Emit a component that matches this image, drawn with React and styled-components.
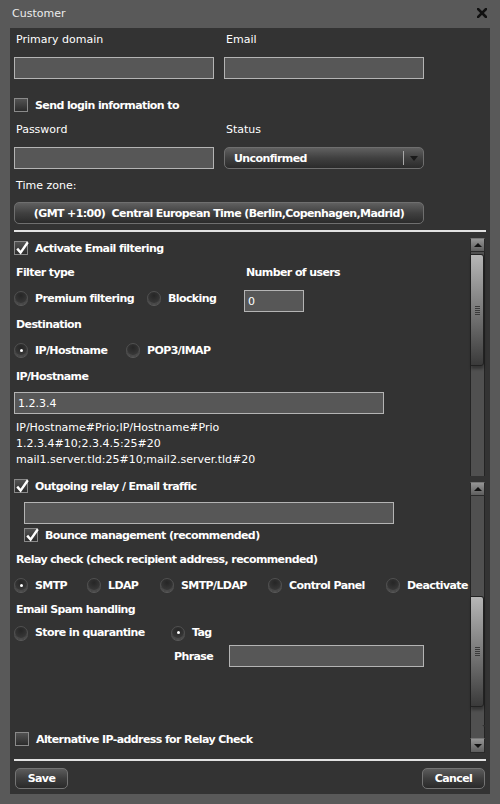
import React from 'react';
import styled, { createGlobalStyle } from 'styled-components';

const GlobalStyle = createGlobalStyle`
  html, body {
    margin: 0;
    padding: 0;
    background: #595959;
  }
  body {
    font-family: "DejaVu Sans", Verdana, sans-serif;
    font-size: 11px;
    color: #fff;
  }
  * {
    box-sizing: border-box;
  }
`;

const Dialog = styled.div`
  width: 500px;
  height: 804px;
  background: #595959;
  display: flex;
  flex-direction: column;
`;

const TitleBar = styled.div`
  height: 28px;
  flex: none;
  display: flex;
  align-items: center;
  justify-content: space-between;
  padding: 0 13px 2px 12px;
  color: #ececec;
`;

const CloseButton = styled.span`
  display: flex;
  width: 10px;
  height: 10px;
  cursor: pointer;
`;

const Panel = styled.div`
  flex: 1;
  margin: 0 10px 10px;
  background: #333333;
  display: flex;
  flex-direction: column;
`;

const TopForm = styled.div`
  padding: 4px 0 0 4px;
  display: flex;
  flex-direction: column;
`;

const Pair = styled.div`
  display: grid;
  grid-template-columns: 200px 200px;
  column-gap: 10px;
  row-gap: 9px;
  margin-top: ${p => p.$mt || 0}px;
`;

const FieldLabel = styled.div`
  height: 16px;
  line-height: 16px;
  padding-left: 2px;
  margin-top: ${p => p.$mt || 0}px;
  white-space: nowrap;
`;

const BoldLabel = styled.div`
  font-weight: bold;
  letter-spacing: -0.6px;
  padding-left: 2px;
  width: ${p => (p.$w ? `${p.$w}px` : 'auto')};
  flex: none;
  white-space: nowrap;
`;

const TextInput = styled.input`
  height: 22px;
  width: ${p => p.$w || 200}px;
  flex: none;
  margin: 0;
  margin-top: ${p => p.$mt || 0}px;
  margin-left: ${p => p.$ml || 0}px;
  align-self: ${p => p.$align || 'auto'};
  background: #575757;
  border: 1px solid #b4b4b4;
  border-radius: 0;
  color: #fff;
  font: 11px "DejaVu Sans", Verdana, sans-serif;
  padding: 0 3px;
  outline: none;
`;

const SelectBox = styled.div`
  height: 22px;
  width: ${p => p.$w}px;
  margin-top: ${p => p.$mt || 0}px;
  border-radius: 5px;
  border: 1px solid #6f6f6f;
  background: linear-gradient(#606060, #404040 50%, #2b2b2b);
  display: flex;
  align-items: center;
  font-weight: bold;
  letter-spacing: -0.6px;
  white-space: pre;
  justify-content: ${p => (p.$center ? 'center' : 'flex-start')};
`;

const SelectValue = styled.span`
  flex: 1;
  padding-left: 9px;
`;

const SelectSep = styled.span`
  width: 1px;
  height: 14px;
  background: #a8a8a8;
`;

const SelectArrow = styled.span`
  width: 19px;
  display: flex;
  justify-content: center;
  &::after {
    content: '';
    border-left: 4px solid transparent;
    border-right: 4px solid transparent;
    border-top: 5px solid #1a1a1a;
  }
`;

const CheckRow = styled.div`
  display: flex;
  align-items: center;
  height: ${p => p.$h || 18}px;
  margin-top: ${p => p.$mt || 0}px;
  padding-left: ${p => p.$indent || 0}px;
  gap: 5px;
  font-weight: bold;
  letter-spacing: -0.6px;
  white-space: nowrap;
`;

const Box = styled.span`
  position: relative;
  width: 14px;
  height: 14px;
  flex: none;
  border: 1px solid #8a8a8a;
  background: linear-gradient(#535353, #2c2c2c);
`;

const Tick = styled.svg`
  position: absolute;
  left: 0;
  top: -2px;
  width: 14px;
  height: 15px;
  overflow: visible;
`;

const Row = styled.div`
  display: flex;
  align-items: center;
  height: ${p => p.$h}px;
  padding-left: ${p => p.$indent || 0}px;
`;

const RadioOption = styled.div`
  display: flex;
  align-items: center;
  gap: 7px;
  width: ${p => (p.$w ? `${p.$w}px` : 'auto')};
  flex: none;
  font-weight: bold;
  letter-spacing: -0.6px;
  white-space: nowrap;
`;

const RadioDot = styled.span`
  width: 14px;
  height: 14px;
  flex: none;
  border-radius: 50%;
  border: 1px solid #505050;
  background: radial-gradient(circle at 50% 30%, #262626, #3a3a3a 80%);
  box-shadow: inset 0 -1px 0 #4a4a4a, 0 1px 0 #5a5a5a;
  display: flex;
  align-items: center;
  justify-content: center;
  &::after {
    content: '';
    display: ${p => (p.$on ? 'block' : 'none')};
    width: 3px;
    height: 3px;
    border-radius: 50%;
    background: #fff;
  }
`;

const HintText = styled.div`
  margin-top: 2px;
  padding-left: 2px;
  line-height: 16px;
  white-space: nowrap;
`;

const Divider = styled.div`
  height: 2px;
  margin: ${p => p.$mt || 0}px 4px 0;
  background: #e2e2e2;
  flex: none;
`;

const Body = styled.div`
  display: flex;
  flex-direction: column;
`;

const Section = styled.div`
  display: flex;
  height: ${p => p.$h}px;
`;

const SectionContent = styled.div`
  flex: 1;
  min-width: 0;
  padding: ${p => p.$top || 0}px 0 0 4px;
  display: flex;
  flex-direction: column;
`;

const ScrollCol = styled.div`
  width: 15px;
  flex: none;
  margin-right: 5px;
  padding-top: ${p => p.$top || 0}px;
  display: flex;
  flex-direction: column;
`;

const ScrollArrow = styled.div`
  height: ${p => p.$h || 14}px;
  flex: none;
  background: linear-gradient(#959595, #5e5e5e);
  border: 1px solid #2a2a2a;
  border-top-color: #777;
  display: flex;
  align-items: center;
  justify-content: center;
  &::after {
    content: '';
    border-left: 4px solid transparent;
    border-right: 4px solid transparent;
    ${p => (p.$down ? 'border-top: 4px solid #111;' : 'border-bottom: 4px solid #111;')}
  }
`;

const Track = styled.div`
  flex: ${p => (p.$h ? 'none' : 1)};
  height: ${p => (p.$h ? `${p.$h}px` : 'auto')};
  background: #505050;
  border-left: 1px solid #242424;
  border-right: 1px solid #242424;
  border-radius: ${p => (p.$round ? '0 3px 0 0' : '0')};
`;

const Thumb = styled.div`
  margin-top: ${p => p.$offset}px;
  height: ${p => p.$h}px;
  border-radius: 0 3px 3px 0;
  border: 1px solid #222;
  border-left: none;
  background: linear-gradient(#b6b6b6, #7a7a7a 50%, #3a3a3a);
  box-shadow: 0 3px 3px rgba(0, 0, 0, 0.35);
  display: flex;
  align-items: center;
  justify-content: center;
  &::after {
    content: '';
    width: 5px;
    height: 9px;
    background: repeating-linear-gradient(#3a3a3a 0 1px, transparent 1px 2px);
  }
`;

const Footer = styled.div`
  display: flex;
  justify-content: space-between;
  padding: 0 5px;
  margin-top: 7px;
`;

const Button = styled.button`
  height: 21px;
  width: ${p => p.$w}px;
  border-radius: 5px;
  border: 1px solid #747474;
  background: linear-gradient(#5c5c5c, #3e3e3e 50%, #2a2a2a);
  color: #fff;
  font: bold 11px "DejaVu Sans", Verdana, sans-serif;
  letter-spacing: -0.6px;
  padding: 0;
  cursor: pointer;
`;

const Checkbox = ({ checked }) => (
  <Box>
    {checked && (
      <Tick viewBox="0 0 14 15">
        <path d="M2.2 8.6 L5.6 12.6 L12.8 2.2" fill="none" stroke="#fff" strokeWidth="2.4" strokeLinejoin="miter" />
      </Tick>
    )}
  </Box>
);

const Radio = ({ on, w, children }) => (
  <RadioOption $w={w}>
    <RadioDot $on={on} />
    {children}
  </RadioOption>
);

export default function App() {
  return (
    <>
      <GlobalStyle />
      <Dialog>
        <TitleBar>
          <span>Customer</span>
          <CloseButton>
            <svg width="10" height="10" viewBox="0 0 10 10">
              <path d="M1 1 L9 9 M9 1 L1 9" stroke="#111" strokeWidth="2.6" strokeLinecap="square" />
            </svg>
          </CloseButton>
        </TitleBar>
        <Panel>
          <TopForm>
            <Pair>
              <FieldLabel>Primary domain</FieldLabel>
              <FieldLabel>Email</FieldLabel>
              <TextInput readOnly />
              <TextInput readOnly />
            </Pair>
            <CheckRow $mt={17} $h={18} style={{ gap: 7 }}>
              <Checkbox />
              Send login information to
            </CheckRow>
            <Pair $mt={8}>
              <FieldLabel>Password</FieldLabel>
              <FieldLabel>Status</FieldLabel>
              <TextInput readOnly />
              <SelectBox $w={200}>
                <SelectValue>Unconfirmed</SelectValue>
                <SelectSep />
                <SelectArrow />
              </SelectBox>
            </Pair>
            <FieldLabel $mt={9}>Time zone:</FieldLabel>
            <SelectBox $w={410} $mt={8} $center>
              {'(GMT +1:00)  Central European Time (Berlin,Copenhagen,Madrid)'}
            </SelectBox>
          </TopForm>
          <Divider $mt={6} />
          <Body>
            <Section $h={244}>
              <SectionContent $top={4}>
                <CheckRow $h={24} style={{ gap: 7 }}>
                  <Checkbox checked />
                  Activate Email filtering
                </CheckRow>
                <Row $h={24}>
                  <BoldLabel $w={230}>Filter type</BoldLabel>
                  <BoldLabel>Number of users</BoldLabel>
                </Row>
                <Row $h={28}>
                  <Radio w={133}>Premium filtering</Radio>
                  <Radio w={97}>Blocking</Radio>
                  <TextInput readOnly $w={60} $align="flex-end" value="0" />
                </Row>
                <Row $h={24}>
                  <BoldLabel>Destination</BoldLabel>
                </Row>
                <Row $h={28}>
                  <Radio w={112} on>IP/Hostname</Radio>
                  <Radio>POP3/IMAP</Radio>
                </Row>
                <Row $h={24}>
                  <BoldLabel>IP/Hostname</BoldLabel>
                </Row>
                <Row $h={30}>
                  <TextInput readOnly $w={370} value="1.2.3.4" />
                </Row>
                <HintText>
                  IP/Hostname#Prio;IP/Hostname#Prio
                  <br />
                  1.2.3.4#10;2.3.4.5:25#20
                  <br />
                  mail1.server.tld:25#10;mail2.server.tld#20
                </HintText>
              </SectionContent>
              <ScrollCol $top={6}>
                <ScrollArrow />
                <Track>
                  <Thumb $offset={2} $h={112} />
                </Track>
              </ScrollCol>
            </Section>

            <Section $h={249}>
              <SectionContent>
                <CheckRow $h={20} style={{ gap: 7 }}>
                  <Checkbox checked />
                  Outgoing relay / Email traffic
                </CheckRow>
                <TextInput readOnly $w={370} $ml={10} $mt={6} />
                <CheckRow $h={22} $indent={10} style={{ gap: 7 }}>
                  <Checkbox checked />
                  Bounce management (recommended)
                </CheckRow>
                <Row $h={26}>
                  <BoldLabel>Relay check (check recipient address, recommended)</BoldLabel>
                </Row>
                <Row $h={26}>
                  <Radio w={73} on>SMTP</Radio>
                  <Radio w={73}>LDAP</Radio>
                  <Radio w={108}>SMTP/LDAP</Radio>
                  <Radio w={118}>Control Panel</Radio>
                  <Radio>Deactivate</Radio>
                </Row>
                <Row $h={22}>
                  <BoldLabel>Email Spam handling</BoldLabel>
                </Row>
                <Row $h={25}>
                  <Radio w={157}>Store in quarantine</Radio>
                  <Radio on>Tag</Radio>
                </Row>
                <Row $h={22} $indent={158}>
                  <BoldLabel $w={57}>Phrase</BoldLabel>
                  <TextInput readOnly $w={195} />
                </Row>
              </SectionContent>
              <ScrollCol $top={6}>
                <ScrollArrow />
                <Track>
                  <Thumb $offset={100} $h={111} />
                </Track>
              </ScrollCol>
            </Section>

            <Section $h={28}>
              <SectionContent>
                <CheckRow $h={28} $indent={1} style={{ gap: 7 }}>
                  <Checkbox />
                  Alternative IP-address for Relay Check
                </CheckRow>
              </SectionContent>
              <ScrollCol>
                <Track $h={13} $round />
                <ScrollArrow $h={15} $down />
              </ScrollCol>
            </Section>
          </Body>
          <Divider $mt={6} />
          <Footer>
            <Button $w={53}>Save</Button>
            <Button $w={63}>Cancel</Button>
          </Footer>
        </Panel>
      </Dialog>
    </>
  );
}
